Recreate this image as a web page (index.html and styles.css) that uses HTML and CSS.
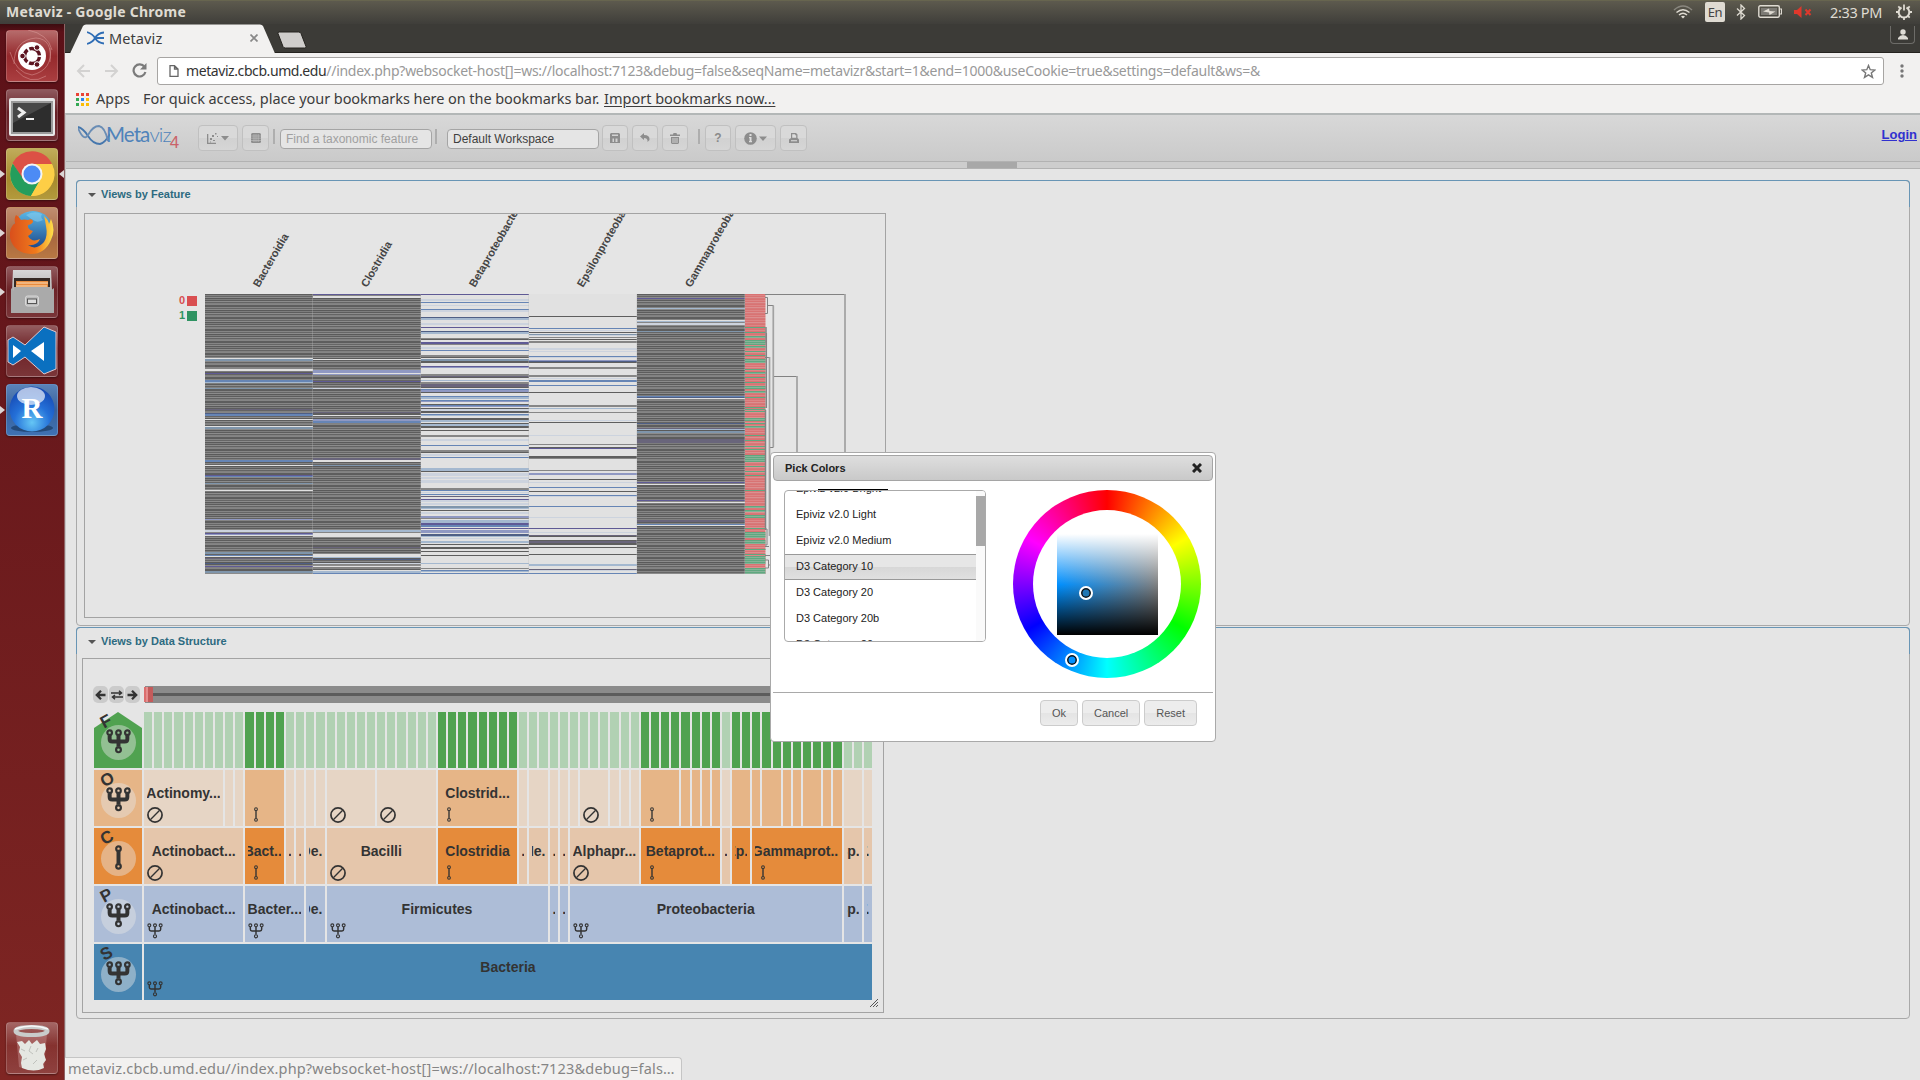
FILE: index.html
```html
<!DOCTYPE html>
<html lang="en">
<head>
<meta charset="utf-8">
<title>Metaviz</title>
<link rel="stylesheet" href="styles.css">
</head>
<body>
<svg width="0" height="0" class="defs">
  <defs>
    <symbol id="fork" viewBox="0 0 24 24"><g fill="none" stroke="currentColor"><path d="M3.500 6v3.500q0 2.500 2.500 2.500h12q2.500 0 2.500-2.500V6M12 6v11" stroke-width="var(--w)"/><circle cx="3.500" cy="3.500" r="2.200" stroke-width="var(--c)"/><circle cx="12" cy="3.500" r="2.200" stroke-width="var(--c)"/><circle cx="20.500" cy="3.500" r="2.200" stroke-width="var(--c)"/><circle cx="12" cy="20" r="2.300" stroke-width="var(--c)"/></g></symbol>
    <symbol id="single" viewBox="0 0 24 24"><g fill="none" stroke="currentColor"><path d="M12 6v12" stroke-width="var(--w)"/><circle cx="12" cy="3.500" r="2.200" stroke-width="var(--c)"/><circle cx="12" cy="20.500" r="2.200" stroke-width="var(--c)"/></g></symbol>
    <symbol id="ban" viewBox="0 0 24 24"><g fill="none" stroke="currentColor"><circle cx="12" cy="12" r="10.600" stroke-width="2.600"/><path d="M5 19L19 5" stroke-width="2"/></g></symbol>
    <linearGradient id="steel" x2="0" y2="1"><stop offset="0" stop-color="#d8d8d8"/><stop offset="1" stop-color="#8f8f8f"/></linearGradient>
    <linearGradient id="ffx" x2="0" y2="1"><stop offset="0" stop-color="#5ab8e8"/><stop offset="1" stop-color="#173f83"/></linearGradient>
    <linearGradient id="fox" x1="0" x2="1"><stop offset="0" stop-color="#d94f1c"/><stop offset=".6" stop-color="#f07a1c"/><stop offset="1" stop-color="#ffe04a"/></linearGradient>
    <radialGradient id="rball" cx=".5" cy=".8" r=".8"><stop offset="0" stop-color="#65c6f5"/><stop offset=".5" stop-color="#2470d8"/><stop offset="1" stop-color="#1546b0"/></radialGradient>
  </defs>
</svg>

<header class="panel">
  <span class="panel-title">Metaviz - Google Chrome</span>
  <div class="indicators">
    <svg class="wifi" width="20" height="14" viewBox="0 0 20 14" fill="none" stroke="#dfdbd2" stroke-width="1.500"><path d="M1 5Q10-3 19 5" stroke="#8a877f"/><path d="M3.500 7.500Q10 2 16.500 7.500M6 10Q10 6.500 14 10"/><path d="M8 11.500Q10 10 12 11.500L10 13.500z" fill="#dfdbd2" stroke="none"/></svg>
    <span class="lang">En</span>
    <svg class="bt" width="10" height="16" viewBox="0 0 10 16" fill="none" stroke="#dfdbd2" stroke-width="1.300"><path d="M1 4.500L8.500 11.500 5 15V1L8.500 4.500 1 11.500"/></svg>
    <svg class="battery" width="24" height="13" viewBox="0 0 24 13"><rect x=".8" y=".8" width="20.500" height="11.400" rx="1.500" fill="none" stroke="#dfdbd2" stroke-width="1.400"/><rect x="3" y="3" width="16" height="7" fill="#7c7a74"/><path d="M22 4h1.500v5H22" fill="none" stroke="#dfdbd2" stroke-width="1.200"/><path d="M5 6.500l6-3 .5 2.500 6 .5-6 3.500-.5-2.500z" fill="#dfdbd2"/></svg>
    <svg class="mute" width="18" height="12" viewBox="0 0 18 12"><path d="M0 4h3l4.500-4v12L3 8H0z" fill="#df382c"/><path d="M11.500 3.500l5 5.500m0-5.500l-5 5.500" stroke="#df382c" stroke-width="2"/></svg>
    <span class="clock">2:33 PM</span>
    <svg class="gear" width="16" height="16" viewBox="0 0 16 16" fill="none" stroke="#dfdbd2"><path d="M5.500 3.500a5.300 5.300 0 1 0 5 0" stroke-width="2"/><path d="M8 .500v6" stroke-width="1.800"/><path d="M8 13v3M0 8h3M13 8h3M2.300 2.300l2 2M13.700 2.300l-2 2M2.300 13.700l2-2M13.700 13.700l-2-2" stroke-width="1.800"/></svg>
  </div>
</header>

<div class="desktop">
  <nav class="launcher">
    <div class="tile dash"><svg viewBox="0 0 52 52"><g fill="none" stroke="#e5a9a6" stroke-opacity=".45"><path d="M8 34Q8 10 30 8Q47 9 44 32"/><path d="M44 18Q47 40 26 45Q10 43 4 22"/><path d="M22 0Q42 4 46 20M10 40Q24 56 40 46"/></g><circle cx="26" cy="26" r="14" fill="#fff"/><circle cx="26" cy="26" r="7.500" fill="none" stroke="#5d1420" stroke-width="3.400" stroke-dasharray="13.700 2" stroke-dashoffset="-1"/><g fill="#5d1420" stroke="#fff"><circle cx="16.500" cy="26" r="2.800"/><circle cx="31" cy="17.500" r="2.800"/><circle cx="31" cy="34.500" r="2.800"/></g></svg></div>
    <div class="tile"><svg viewBox="0 0 52 52"><rect x="3" y="9" width="46" height="38" rx="2" fill="#e7e7e7"/><rect x="5" y="12" width="42" height="33" fill="#9a9a9a"/><rect x="7" y="14" width="38" height="29" fill="#2d2d2d"/><path d="M7 14h38L7 34z" fill="#484848"/><path d="M12 19l6 4.500-6 4.500" fill="none" stroke="#eee" stroke-width="3"/><path d="M20 30h8" stroke="#eee" stroke-width="2"/></svg></div>
    <div class="tile gold run active"><svg viewBox="0 0 52 52"><circle cx="26" cy="26" r="22" fill="#fccf45"/><path d="M6.500 15A22 22 0 0 1 46 16H26L17 32z" fill="#dc5145"/><path d="M6.800 15.500A22 22 0 0 0 25 48L34 32 18 32z" fill="#249d5c"/><path d="M26 16h20A22 22 0 0 1 25 48l10-17z" fill="#fdce46"/><circle cx="26" cy="26" r="10.500" fill="#f4f4f4"/><circle cx="26" cy="26" r="8.500" fill="#4c8bf5"/></svg></div>
    <div class="tile brown run"><svg viewBox="0 0 52 52"><circle cx="27" cy="24" r="20" fill="url(#ffx)"/><path d="M20 8q8-5 16-1-2 3 1 6-5 3-8 1-4-2-9-6z" fill="#8fd2f0" opacity=".5"/><path d="M38 9q4 3 5 8l2-5q5 11 0 21-6 14-20 14Q8 46 4 31 3 20 9 16q-1-5 1-8 4 2 5 5 3-1 7 0 4-2 5 1 0 3-5 4-1 4 5 6-2 4-5 5 4 7 12 3-3 7-12 6 8 6 16-3 4-6 2-16-1-6-2-10z" fill="url(#fox)"/></svg></div>
    <div class="tile run"><svg viewBox="0 0 52 52"><path d="M7 4h38l2 41H5z" fill="url(#steel)"/><rect x="8" y="12" width="36" height="12" fill="#352a25"/><path d="M10 15h32v9H10z" fill="#e98b3d"/><path d="M11 17h31M10 20h31" stroke="#f9dfc0"/><path d="M8 21h36v4l4-3v25H5V22l3 3z" fill="#aaa"/><rect x="19.500" y="30" width="13" height="10" rx="2" fill="#bbb" stroke="#d8d8d8"/><rect x="21.500" y="33" width="9" height="4.500" fill="#ddd" stroke="#555"/></svg></div>
    <div class="tile"><svg viewBox="0 0 52 52"><path d="M38 2l12 5v37l-12 5-19-17-12 8-5-3V15l5-3 12 8z" fill="#0a70c0" stroke="#e3c8cc"/><path d="M7 20v13l8-7zM38 17v19L25 26z" fill="#fff"/></svg></div>
    <div class="tile blue run"><svg viewBox="0 0 52 52"><ellipse cx="26" cy="44" rx="21" ry="4" fill="#244a7a"/><circle cx="26" cy="25" r="22.500" fill="url(#rball)"/><ellipse cx="25" cy="12" rx="14" ry="9" fill="#fff" opacity=".65"/><text x="26" y="34" class="r-letter">R</text></svg></div>
    <div class="tile bin"><svg viewBox="0 0 52 52"><path d="M10 12l3 33q13 5 25 0l3-33z" fill="#e7bcbc" opacity=".3"/><path d="M11 20l5-1 3 3 4-4 3 4 5-4 3 4 5-1 1 6-2 5 2 6-3 4 1 4q-10 5-22 0l-1-5 1-6-3-5 1-5z" fill="#e5e7e2"/><path d="M15 27l4 2m6-5l-2 5 4 3m5-6l-2 4m-13 8l4-2m6 6l4-4" stroke="#bfc1bc" fill="none"/><ellipse cx="25.500" cy="9" rx="16" ry="4" fill="none" stroke="#c9cccb" stroke-width="4"/><path d="M9 7q17-6 33 0" stroke="#f7f7f7" stroke-width="1.500" fill="none"/></svg></div>
  </nav>

  <div class="browser">
    <div class="tabstrip">
      <svg class="tab-shape" width="245" height="30" viewBox="0 0 245 30"><path d="M0 29.500h5L18 2q1-1.500 3-1.500h174q2 0 3 1.500l12 27.500h35v.5H0z" fill="#f2f1f0"/><path d="M214.500 8h19q2 0 2.500 1.500l5 13q0 1.500-1.500 1.500h-19q-2 0-2.500-1.500l-5-13Q212.500 8 214.500 8z" fill="#cfcdcb" stroke="#25231f"/></svg>
      <div class="tab">
        <svg width="17" height="14" viewBox="0 0 17 14" fill="none" stroke="#2f6db5" stroke-width="1.800"><path d="M0 1q6 2 8 6 3 5 9 5.500M0 13q6-2 8-6 3-5 9-5.500M9 7h8"/></svg>
        <span class="tab-name">Metaviz</span>
        <svg class="tab-x" width="8" height="8" viewBox="0 0 8 8" stroke="#888" stroke-width="1.700"><path d="M.500.500l7 7m0-7l-7 7"/></svg>
      </div>
      <div class="profile"><svg width="12" height="11" viewBox="0 0 12 11" fill="#dedbd5"><circle cx="6" cy="3" r="2.700"/><path d="M1 10.500V9q2-3 5-3t5 3v1.500z"/></svg></div>
    </div>
    <div class="navbar">
      <svg class="nav-icon" width="15" height="14" viewBox="0 0 15 14" fill="none" stroke="#d3d2d1" stroke-width="2"><path d="M14 7H2m6-6L2 7l6 6"/></svg>
      <svg class="nav-icon" width="15" height="14" viewBox="0 0 15 14" fill="none" stroke="#d3d2d1" stroke-width="2"><path d="M1 7h12M7 1l6 6-6 6"/></svg>
      <svg class="nav-icon" width="15" height="15" viewBox="0 0 15 15" fill="none" stroke="#7b7b7b" stroke-width="2.200"><path d="M12.500 4A6 6 0 1 0 13.400 9"/><path d="M14.500 0v6.500H8z" fill="#7b7b7b" stroke="none"/></svg>
      <div class="omnibox">
        <svg width="10" height="12" viewBox="0 0 10 12" fill="none" stroke="#666" stroke-width="1.300"><path d="M1 .700h4.500L9 4v7.300H1zM5.500.700V4H9"/></svg>
        <span class="url"><b>metaviz.cbcb.umd.edu</b>//index.php?websocket-host[]=ws://localhost:7123&amp;debug=false&amp;seqName=metavizr&amp;start=1&amp;end=1000&amp;useCookie=true&amp;settings=default&amp;ws=&amp;</span>
        <svg class="star" width="15" height="15" viewBox="0 0 15 15" fill="none" stroke="#777" stroke-width="1.400"><path d="M7.500 1.500l1.700 4.200 4.600.3-3.500 2.900 1.200 4.500-4-2.500-4 2.500 1.200-4.500L1.200 6l4.600-.3z"/></svg>
      </div>
      <svg class="dots" width="4" height="14" viewBox="0 0 4 14" fill="#777"><circle cx="2" cy="2" r="1.700"/><circle cx="2" cy="7" r="1.700"/><circle cx="2" cy="12" r="1.700"/></svg>
    </div>
    <div class="bookmarks">
      <span class="apps"><i></i><i></i><i></i><i></i><i></i><i></i><i></i><i></i><i></i></span>
      <span class="b-apps">Apps</span>
      <span class="b-hint">For quick access, place your bookmarks here on the bookmarks bar.</span>
      <span class="b-link">Import bookmarks now...</span>
    </div>

    <main class="page">
      <div class="toolbar">
        <div class="logo">
          <svg width="32" height="20" viewBox="0 0 32 20" fill="none" stroke-width="1.800"><path d="M0 2q5 1 10 9 5 8 12 8 5-1 10-10" stroke="#4677ad"/><path d="M0 3q6 14 10 7Q15 1 21 1q6 1 9 15" stroke="#6a8db5"/></svg>
          <span class="logo-text"><em>Meta</em>viz</span><span class="logo-four">4</span>
        </div>
        <span class="btn b1"><svg width="24" height="13" viewBox="0 0 24 13" fill="#8d8d8d"><path d="M1 2v10h9v-1.300H2.300V2z"/><path d="M4 6h2v2H4zM6 3h2v2H6zM9 1h1.500v1.500H9zM7 8h2v1H7zM4 9.500h1v1H4zM11 4h1v1h-1zM15 4h8l-4 4.500z"/></svg></span>
        <span class="btn b2"><svg width="10" height="10" viewBox="0 0 10 10"><rect width="10" height="10" rx="1.500" fill="#8d8d8d"/><path d="M0 3h10M0 5.200h10M0 7.500h10M3 1v8M5 1v8M7.200 1v8" stroke="#c2c2c2" stroke-width=".6"/></svg></span>
        <i class="sep s1"></i>
        <span class="field hint f1">Find a taxonomic feature</span>
        <i class="sep s2"></i>
        <span class="field f2">Default Workspace</span>
        <span class="btn b3"><svg width="10" height="10" viewBox="0 0 10 10"><path d="M1 0h8l1 1v9H0V1z" fill="#8d8d8d"/><path d="M2.500 5.500h1.500V9H2.500zM5.500 5.500H7.500v3.500H5.500zM2 1.500h6v1.500H2z" fill="#d2d2d2"/></svg></span>
        <span class="btn b4"><svg width="10" height="10" viewBox="0 0 10 10"><path d="M4 0v2q6 0 5.500 5L7.500 9q.5-4-3.500-4v2L0 3.500z" fill="#8d8d8d"/></svg></span>
        <span class="btn b5"><svg width="10" height="11" viewBox="0 0 10 11" fill="#8d8d8d"><path d="M0 1.500h3L3.500 0h3L7 1.500h3V3H0z"/><path d="M1 4h8v6l-1 1H2l-1-1zm1.500 1v5h1V5zm2 0v5h1V5zm2 0v5h1V5z" fill-rule="evenodd"/></svg></span>
        <i class="sep s3"></i>
        <span class="btn b6 q">?</span>
        <span class="btn b7"><svg width="24" height="13" viewBox="0 0 24 13"><circle cx="6.500" cy="6.500" r="6.300" fill="#8d8d8d"/><path d="M5.500 2h2v2h-2zM5 5h2.500v4H8v1.200H5V9h.6V6.200H5z" fill="#ddd"/><path d="M15 4.500h8L19 9z" fill="#8d8d8d"/></svg></span>
        <span class="btn b8"><svg width="10" height="10" viewBox="0 0 10 10"><path d="M2 0h5l1.500 1.500V5L10 6.500V10H0V6.500L2 5z" fill="#8d8d8d"/><path d="M3.200 1.200h3v1h1v2.500h-4zM2 7.300h6v1H2z" fill="#ddd"/></svg></span>
        <a class="login">Login</a>
      </div>
      <div class="splitter"><i></i></div>

      <section class="views by-feature">
        <h3>Views by Feature</h3>
        <div class="chart chart-heat"><svg id="heat" width="800" height="403" viewBox="85 214 800 403"></svg></div>
      </section>
      <section class="views by-structure">
        <h3>Views by Data Structure</h3>
        <div class="chart chart-tree">
          <div class="scroll-row">
            <span class="mini"><svg width="11" height="10" viewBox="0 0 11 10" fill="none" stroke="#333" stroke-width="2.300"><path d="M10.500 5H2.500M6 .800L1.800 5 6 9.200"/></svg></span>
            <span class="mini"><svg width="12" height="10" viewBox="0 0 12 10" fill="none" stroke="#333" stroke-width="1.500"><path d="M0 3h10M8 .800L10.500 3 8 5M12 7H2M4 5L1.500 7 4 9.200"/></svg></span>
            <span class="mini"><svg width="11" height="10" viewBox="0 0 11 10" fill="none" stroke="#333" stroke-width="2.300"><path d="M.500 5h8M5 .800L9.200 5 5 9.200"/></svg></span>
            <span class="track"><i></i></span>
          </div>
          <div id="levels" class="levels"></div>
          <svg class="grip" width="8" height="8" viewBox="0 0 8 8" stroke="#555" stroke-width="1"><path d="M0 8l8-8M3 8l5-5M6 8l2-2"/></svg>
        </div>
      </section>
      <div class="status">metaviz.cbcb.umd.edu//index.php?websocket-host[]=ws://localhost:7123&amp;debug=fals…</div>
    </main>
  </div>
</div>

<div class="dialog">
  <div class="titlebar"><span>Pick Colors</span><svg width="10" height="10" viewBox="0 0 10 10" stroke="#222" stroke-width="3"><path d="M1 1l8 8m0-8l-8 8"/></svg></div>
  <div class="dialog-body">
    <i class="strike"></i>
    <div class="list">
      <ul><li>Epiviz v2.0 Bright</li><li>Epiviz v2.0 Light</li><li>Epiviz v2.0 Medium</li><li class="on">D3 Category 10</li><li>D3 Category 20</li><li>D3 Category 20b</li><li>D3 Category 20c</li></ul>
      <span class="bar"><i></i></span>
    </div>
    <div class="wheel"><div class="hole"><div class="square"></div></div><i class="mark m1"></i><i class="mark m2"></i></div>
  </div>
  <div class="buttons"><button>Ok</button><button>Cancel</button><button>Reset</button></div>
</div>
<script src="charts.js"></script>
</body>
</html>
```
FILE: styles.css
```css
* { box-sizing: border-box; }
body { margin: 0; width: 1920px; height: 1080px; overflow: hidden; display: flex; flex-direction: column; font-family: "Liberation Sans", Arial, sans-serif; background: #e5e5e5; }
.defs { position: absolute; }
svg { display: block; flex: none; }
.panel, .browser .tab, .navbar, .bookmarks, .status { font-family: "Noto Sans", sans-serif; }
.panel { height: 24px; flex: none; background: linear-gradient(#5d5a4e, #3f3e3a); border-top: 1px solid #67654f; color: #dfdbd2; display: flex; justify-content: space-between; align-items: center; padding: 0 0 2px 6px; }
.panel-title { font-size: 14px; font-weight: 700; letter-spacing: .25px; }
.indicators { display: flex; align-items: center; padding-right: 8px; }
.lang { background: #dfdbd2; color: #444; width: 20px; height: 20px; border-radius: 2px; font-size: 13px; line-height: 20px; text-align: center; margin: 0 11px 0 12px; letter-spacing: -.5px; }
.battery { margin: 0 12px 0 12px; }
.clock { font-size: 14.5px; margin: 0 13px 0 18px; width: 53px; letter-spacing: -.35px; white-space: nowrap; }
.desktop { display: flex; flex: 1; min-height: 0; }
.launcher { width: 65px; flex: none; background: linear-gradient(#3c0c10, #5c1118 8px, #7f2623); border-right: 1px solid #8f6365; padding: 6px 6px; display: flex; flex-direction: column; gap: 7px; }
.tile { width: 52px; height: 52px; flex: none; border-radius: 4px; border: 1px solid rgba(255,255,255,.18); background: linear-gradient(rgba(255,255,255,.3), rgba(255,255,255,.06) 45%, rgba(255,255,255,.13)); position: relative; box-shadow: 0 1px 2px rgba(0,0,0,.4); }
.tile svg { width: 52px; height: 52px; margin: -1px; }
.dash { background: linear-gradient(#b66b6b, #95292c 50%, #aa3e40); }
.gold { background: linear-gradient(#c0ac5a, #a78a2e 60%, #b39a3c); }
.brown { background: linear-gradient(#c08d70, #a96840 60%, #b87843); }
.blue { background: linear-gradient(#5a83b8, #38619c 50%, #3f72b4); }
.bin { margin-top: auto; }
.run::before { content: ""; position: absolute; left: -7px; top: 21px; border: 4px solid transparent; border-left: 5px solid #dcd5d5; border-right: 0; }
.active::after { content: ""; position: absolute; right: -7px; top: 21px; border: 4px solid transparent; border-right: 5px solid #dcd5d5; border-left: 0; }
.r-letter { font: 700 29px "Liberation Serif", serif; fill: #fff; text-anchor: middle; }
.browser { flex: 1; display: flex; flex-direction: column; min-width: 0; }
.tabstrip { height: 29px; flex: none; background: #3c3b37; display: flex; justify-content: space-between; position: relative; border-bottom: 1px solid #25231f; }
.tab-shape { position: absolute; left: 0; top: 0; }
.tab { position: relative; width: 210px; display: flex; align-items: center; padding-left: 22px; color: #3c3c3c; }
.tab-name { font-size: 14.5px; margin-left: 5px; flex: 1; letter-spacing: .1px; }
.tab-x { margin-right: 17px; }
.profile { width: 25px; height: 18px; border: 1px solid #6d6c68; border-top: 0; border-radius: 0 0 4px 4px; margin: 2px 5px 0 0; display: flex; justify-content: center; padding-top: 3px; }
.navbar { height: 35px; flex: none; background: #f2f1f0; display: flex; align-items: center; padding-left: 11px; }
.nav-icon { margin-right: 13px; }
.omnibox { width: 1727px; height: 28px; margin-left: -3px; border: 1px solid #a7a5a3; border-radius: 3px; background: #fff; display: flex; align-items: center; padding: 0 7px 0 11px; margin-top: 1px; }
.url { margin: -2px 0 0 7px; font-size: 14px; letter-spacing: -.26px; color: #999; white-space: nowrap; flex: 1; }
.url b { font-weight: 400; color: #333; letter-spacing: -.42px; }
.dots { margin-left: 16px; }
.bookmarks { height: 25px; flex: none; background: #f2f1f0; display: flex; align-items: center; padding: 0 0 5px 11px; font-size: 14.5px; color: #3c3c3c; white-space: nowrap; }
.apps { display: grid; grid-template-columns: repeat(3, 3px); gap: 2px; margin: 3px 7px 0 0; }
.apps i { height: 3px; background: #ea4335; }
.apps i:nth-child(4) { background: #34a853; } .apps i:nth-child(5) { background: #2a84f0; } .apps i:nth-child(6) { background: #fbbc05; }
.apps i:nth-child(7) { background: #34a853; } .apps i:nth-child(8), .apps i:nth-child(9) { background: #fbbc05; }
.b-apps { width: 47px; } .b-hint { width: 461px; letter-spacing: -.06px; } .b-link { text-decoration: underline; text-underline-offset: 2px; }
.page { flex: 1; position: relative; border-top: 2px solid #b3b7b7; border-left: 1px solid #c5c5c5; background: #e5e5e5; min-height: 0; }
.toolbar { height: 47px; background: linear-gradient(#d8d8d8, #cacaca); border-bottom: 1px solid #b2b2b2; display: flex; padding: 10px 3px 0 12px; font-size: 12px; }
.logo { display: flex; width: 120px; height: 26px; }
.logo svg { margin-right: -4px; }
.logo-text { font: 300 20.5px/18px Lato, sans-serif; color: #4f83ba; letter-spacing: -.9px; }
.logo-text em { font-style: normal; font-weight: 400; }
.logo-four { font: 17px/36px "Liberation Sans", sans-serif; color: #c9636a; margin-left: -1px; }
.btn { height: 26px; border: 1px solid #c0c0c0; border-radius: 4px; background: linear-gradient(#d9d9d9 50%, #d1d1d1 50%, #d6d6d6); display: flex; align-items: center; justify-content: center; color: #8a8a8a; margin-right: 4px; }
.b1 { width: 40px; } .b2 { width: 27px; } .b3, .b4, .b5, .b6 { width: 26px; } .b7 { width: 41px; } .b8 { width: 27px; }
.q { font-weight: 700; font-size: 12px; }
.sep { width: 2px; height: 15px; background: #aeaeae; margin-top: 4px; }
.s1 { margin-right: 5px; } .s2 { margin: 4px 10px 0 3px; } .s3 { margin: 4px 5px 0 6px; }
.field { width: 152px; height: 20px; margin-top: 4px; border: 1px solid #a5a5a5; border-radius: 4px; background: #e5e5e5; line-height: 18px; padding-left: 5px; color: #3f3f3f; }
.hint { color: #a0a0a0; } .f2 { margin-right: 3px; }
.login { margin: 2px 0 0 auto; color: #3030cf; font-weight: 700; font-size: 13px; text-decoration: underline; }
.splitter { height: 7px; background: #cdcdcd; border-bottom: 1px solid #b2b2b2; padding-left: 901px; }
.splitter i { display: block; width: 50px; height: 6px; background: #a8a8a8; }
.views { width: 1834px; margin: 11px 0 0 10px; border: 1px solid #a9a9a9; border-radius: 4px; position: relative; display: flow-root; }
.by-feature { height: 446px; } .by-structure { height: 392px; margin-top: 1px; }
.views h3 { margin: -1px; height: 27px; border: 1px solid #6895b5; border-bottom: 0; border-radius: 4px 4px 0 0; font-size: 11px; line-height: 27px; padding-left: 24px; color: #2c6a80; position: relative; }
.views h3::before { content: ""; position: absolute; left: 11px; top: 12px; border: 4px solid transparent; border-top-color: #555; border-bottom: 0; }
.chart { border: 1px solid #a3a3a3; }
.chart-heat { width: 802px; height: 405px; margin: 7px 0 0 7px; overflow: hidden; }
.chart-tree { width: 802px; height: 355px; margin: 5px 0 0 5px; position: relative; }
.col-label { font: 700 11px "Liberation Sans", sans-serif; fill: #444; }
.key { font: 700 11px "Liberation Sans", sans-serif; text-anchor: end; }
.scroll-row { display: flex; margin: 27px 0 9px 10px; height: 17px; gap: 1px; }
.mini { width: 15px; border-radius: 5px; background: #cbcbcb; display: flex; align-items: center; justify-content: center; }
.track { margin-left: 4px; width: 728px; background: linear-gradient(#8b8b8b 7px, #5c5c5c 7px 10px, #8b8b8b 10px); position: relative; }
.track i { position: absolute; left: -1px; top: 1px; width: 9px; height: 15px; background: linear-gradient(90deg, #dc6f6f 2px, #e58e8e 2px 4px, #c45b5b 4px); }
.levels { display: flex; flex-direction: column; gap: 2px; margin-left: 11px; color: #333; }
.level { display: grid; grid-template-columns: 48px 728px; gap: 2px; height: 56px; }
.lhead { position: relative; --w: 3.800; --c: 2.100; }
.lhead > i { display: block; height: 56px; }
.level:first-child .lhead > i { clip-path: polygon(0 16px, 50% 0, 100% 16px, 100% 100%, 0 100%); }
.lhead::after { content: ""; position: absolute; left: 6.500px; top: 13px; width: 35px; height: 35px; border-radius: 50%; background: rgba(229,229,229,.45); }
.lhead svg { position: absolute; z-index: 1; left: 12px; top: 17px; width: 25px; height: 25px; }
.lhead b { position: absolute; z-index: 1; left: 7px; top: 2px; font-size: 17px; line-height: 16px; transform: rotate(-28deg); }
.lcells { display: grid; grid-template-columns: repeat(72, 1fr); gap: 2px; }
.cell { position: relative; overflow: hidden; min-width: 0; --w: 2.200; --c: 1.700; }
.cell > span { display: flex; justify-content: center; overflow: hidden; margin: 15px 3px 0; font-size: 14px; line-height: 17px; font-weight: 700; white-space: nowrap; }
.cell > svg { position: absolute; left: 3px; bottom: 3px; width: 16px; height: 16px; }
.cell > .i-single { height: 15px; bottom: 4px; }
.grip { position: absolute; right: 5px; bottom: 5px; }
.status { position: absolute; left: -1px; bottom: 0; width: 617px; height: 23px; background: #f2f1f0; border: 1px solid #c5c5c5; border-left: 0; border-bottom: 0; border-radius: 0 4px 0 0; padding-left: 3px; font-size: 14.5px; letter-spacing: .17px; line-height: 21px; color: #858585; white-space: nowrap; }
.dialog { position: absolute; left: 770px; top: 452px; width: 446px; height: 290px; background: #fff; border: 1px solid #a9a9a9; border-radius: 4px; padding: 2px; font-size: 11px; color: #222; }
.titlebar { height: 26px; border: 1px solid #a5a5a5; border-radius: 4px; background: linear-gradient(#dedede, #c9c9c9); display: flex; justify-content: space-between; align-items: center; padding: 0 10px 0 11px; font-weight: 700; }
.dialog-body { height: 212px; border-bottom: 1px solid #a9a9a9; display: flex; padding: 9px 0 0 11px; position: relative; }
.strike { position: absolute; left: 45px; top: 8px; width: 70px; height: 1px; background: #000; }
.list { width: 202px; height: 152px; border: 1px solid #aaa; border-radius: 4px; overflow: hidden; display: flex; }
.list ul { list-style: none; margin: -15px 0 0; padding: 0; flex: 1; }
.list li { height: 26px; line-height: 24px; padding-left: 11px; }
.list .on { background: linear-gradient(#e6e6e6 50%, #d7d7d7 50%, #e0e0e0); border: solid #999; border-width: 1px 0; line-height: 22px; }
.bar { width: 9px; background: #fafafa; padding-top: 5px; }
.bar i { display: block; height: 50px; background: #a8a8a8; }
.wheel { width: 188px; height: 188px; margin-left: 27px; border-radius: 50%; background: conic-gradient(#f00, #ff0, #0f0, #0ff, #00f, #f0f, #f00); position: relative; display: grid; place-items: center; }
.hole { width: 148px; height: 148px; border-radius: 50%; background: #fff; display: grid; place-items: center; }
.square { width: 101px; height: 101px; background: linear-gradient(#fff, rgba(255,255,255,0) 50%, rgba(0,0,0,0) 50%, #000), linear-gradient(90deg, #0090ff, #808080); }
.mark { position: absolute; width: 14px; height: 14px; border: 2px solid #fff; border-radius: 50%; box-shadow: inset 0 0 0 1.500px #111; }
.m1 { left: 66px; top: 96px; background: #1f77b4; } .m2 { left: 52px; top: 163px; background: #0090ff; }
.buttons { display: flex; justify-content: flex-end; gap: 4px; padding: 7px 16px 0 0; }
.buttons button { font: 11px "Liberation Sans", sans-serif; height: 26px; padding: 0 11px; border: 1px solid #ccc; border-radius: 4px; background: linear-gradient(#ededed 50%, #e4e4e4 50%, #ececec); color: #555; }
```
FILE: charts.js
```js
// Heatmap: each entry is "row:colour[:height]" on a 280-row grid.
const COL = { w: '#e0e0e0', p: '#5f5a95', b: '#6685b5', l: '#a4b8cf', v: '#8f98c2', d: '#5e5e5e', g: '#868686', n: '#4f5f85', e: '#ccd3de', k: '#69657b', s: '#7f95ab' };
const columns = [
  ['Bacteroidia', 1, '64:w 65:s:2 74:g 75:w:2 79:p 86:b:2 88:l 94:s 115:k 119:n 120:b:2 125:w 132:w 133:s:2 166:b:2 171:w 181:p 182:b 189:s 196:w 225:v 236:e:2 239:p 240:v 241:w 258:s:2 261:b 262:w 264:k 269:n 272:p 277:s:2'],
  ['Clostridia', 1, '0:p 1:g 2:w:2 65:w 76:v:3 79:w 80:v 87:p 94:e 118:k 121:w 125:v:2 127:b:2 164:k:2 166:w:2 171:s 236:l:2 239:w:4 253:k 259:g 260:w:3 263:l 265:n 269:e 270:g 272:w 276:w 277:l:2 279:b'],
  ['Betaproteobacteria', 0, '0:p 5:e:2 8:b 11:e 15:b 16:e:2 23:n 24:l:2 29:e:2 33:p 37:n 38:l:2 44:g 45:d 48:p:2 50:g 53:e:2 56:b 61:g:2 63:d 65:s:2 67:d:2 72:p 73:v 80:g:2 82:k 83:d 86:l 88:g:2 90:k:3 93:d 95:b 96:v:2 98:d 102:b 103:l:2 106:b 107:v 110:d 111:b 112:v 114:d 115:e:2 117:d:2 120:b 121:l 124:d:2 126:l:2 129:d 130:l:2 132:d:2 136:d 141:g:2 145:e:2 151:b 156:g:2 158:d 160:e:2 163:b 174:l:3 177:d 179:e:3 183:e:2 186:e:3 194:g:2 196:b 198:e 200:b 202:k 205:p 206:e:2 209:e:2 212:s:2 214:l 216:d 218:e:2 222:v:2 224:g 226:l:3 229:p:2 231:b:2 234:p 236:v:3 240:n:2 242:l 244:e 247:l:2 250:d 253:d:2 257:d 261:d 269:l 274:g 276:b 277:l 279:b'],
  ['Epsilonproteobacteria', 0, '22:d 34:b 36:e 38:d 40:s 41:e 43:g 45:d 47:g:2 54:e:2 57:e 62:b 63:e 66:v 67:n 68:d 73:g:2 81:g:2 84:e 86:b:2 91:b 98:d 111:g:2 114:l 118:g 126:e 128:d 141:e 150:g 153:d 154:p 162:d:2 164:g 176:g 179:v:2 185:d 188:e 193:b 197:d 201:b 202:e 212:b 223:e 234:p 238:e 241:k 242:d 246:d 247:k:2 249:d:2 253:d 260:d 270:l:2 275:k 276:e 279:b'],
  ['Gammaproteobacteria', 1, '4:p 14:l 26:w 27:l 28:g 29:e:2 37:s 102:b 103:n 104:w 129:n 134:k 135:l 137:s:2 145:k:4 188:p 190:w 206:p 208:w 226:k:2 230:b 231:w']
];
const strip = '33:1 38:1 42:2 46:5 52:2 57:1 61:1 65:4 75:1 78:2 83:1 88:1 92:2 94:1 97:2 103:1 113:1 115:1 117:1 124:3 129:1 132:2 141:1 146:1 152:1 155:1 161:7 172:1 177:1 181:1 196:1 212:2 216:2 221:3 234:1 238:6 246:4 255:1 260:1 262:8 274:6';
const grey = ['#5d5d5d', '#858585', '#666', '#8b8b8b', '#5a5a5a', '#7d7d7d', '#5d5d5d', '#8c8c8c', '#646464', '#818181', '#858585', '#5e5e5e'];
const rect = (x, y, w, h, f) => `<rect x="${x}" y="${y}" width="${w}" height="${h}" fill="${f}"/>`;
let out = '';
columns.forEach(([name, dark, rows], i) => {
  const x = 205 + i * 108;
  if (dark) for (let r = 0; r < 280; r++) out += rect(x, 294 + r, 108, 1, grey[r % 12]);
  else out += rect(x, 294, 108, 280, '#e1e1e1');
  rows.split(' ').forEach(t => { const [r, c, h] = t.split(':'); out += rect(x, 294 + +r, 108, h || 1, COL[c]); });
  out += rect(x + 107.500, 294, .800, 280, 'rgba(190,190,190,.6)');
  out += `<text class="col-label" transform="translate(${x + 54} 288) rotate(-60)">${name}</text>`;
});
for (let r = 0; r < 280; r++) out += rect(745, 294 + r, 20.500, 1, ['#d97373', '#dc8686', '#d97373', '#db9090', '#d67979'][r % 5]);
strip.split(' ').forEach(t => { const [r, h] = t.split(':'); for (let k = 0; k < h; k++) out += rect(745, 294 + +r + k, 20.500, 1, k % 2 ? '#86b398' : '#5fa880'); });
out += rect(187, 296, 10, 10, '#d94f51') + rect(187, 311, 10, 10, '#2f9362');
out += '<text class="key" x="185" y="304" fill="#d94f51">0</text><text class="key" x="185" y="319" fill="#2f9362">1</text>';
out += '<g fill="none" stroke="#828282"><path d="M765 294.500H845"/><path d="M773.500 376.500H797M768 305.500h5.500M769 447.500h4.500M765 297.500h2.500v16H765M765 357.500h4.500M765 546.500h4M765 529h2v16h-2M765 555.500h5M765 560h3.500v8H765M768 565h3"/><path d="M766 327v16M766.300 333v75M765.500 410v120" stroke-width="1.500"/></g>';
out += '<g fill="none" stroke="#a2a2a2" stroke-width="1.700"><path d="M845 294V560M797 376V560M773.300 305.500V447M769.500 357V536"/></g>';
document.getElementById('heat').innerHTML = out;

// Taxonomy levels: cells are [span, selected, label, icon]; each level spans 72 columns.
const S = (n, on) => Array.from({ length: n }, () => [1, on]);
const levels = [
  ['F', 'fork', '#50a250', '#b1d1b3', [...S(10), ...S(4, 1), ...S(15), ...S(8, 1), ...S(12), ...S(8, 1), ...S(1), ...S(11, 1), ...S(3)]],
  ['O', 'fork', '#e6b587', '#e6d5c5', [[8, 0, 'Actinomy...', 'ban'], ...S(2), [4, 1, '', 'single'], ...S(4), [5, 0, '', 'ban'], [6, 0, '', 'ban'], [8, 1, 'Clostrid...', 'single'], [1], [2], ...S(3), [3, 0, '', 'ban'], ...S(3), [4, 1, '', 'single'], ...S(4, 1), [1], [2, 1], [1, 1], [2, 1], ...S(2, 1), [2, 1], ...S(2, 1), [2], [1]]],
  ['C', 'single', '#e58b3b', '#e5c6ab', [[10, 0, 'Actinobact...', 'ban'], [4, 1, 'Bact...', 'single'], [1, 0, '...'], [1, 0, '...'], [2, 0, 'De...'], [11, 0, 'Bacilli', 'ban'], [8, 1, 'Clostridia', 'single'], [1, 0, '...'], [2, 0, 'Ne...'], [1, 0, 'E...'], [1, 0, 'L...'], [7, 0, 'Alphapr...', 'ban'], [8, 1, 'Betaprot...', 'single'], [1, 0, '...'], [2, 1, 'Ep...'], [9, 1, 'Gammaprot...', 'single'], [2, 0, 'Sp...'], [1, 0, 'T...']]],
  ['P', 'fork', '#adbdd7', '#adbdd7', [[10, 0, 'Actinobact...', 'fork'], [6, 0, 'Bacter...', 'fork'], [2, 0, 'De...'], [22, 0, 'Firmicutes', 'fork'], [1, 0, 'E...'], [1, 0, 'L...'], [27, 0, 'Proteobacteria', 'fork'], [2, 0, 'Sp...'], [1, 0, 'T...']]],
  ['S', 'fork', '#4785b1', '#4785b1', [[72, 0, 'Bacteria', 'fork']]]
];
const icon = id => `<svg class="i-${id}"><use href="#${id}"/></svg>`;
document.getElementById('levels').innerHTML = levels.map(([letter, ic, on, off, cells]) =>
  `<div class="level"><div class="lhead"><i style="background:${on}"></i><b>${letter}</b>${icon(ic)}</div><div class="lcells">` +
  cells.map(([n, sel, label, i]) => `<div class="cell" style="grid-column:span ${n};background:${sel ? on : off}">${label ? `<span>${label}</span>` : ''}${i ? icon(i) : ''}</div>`).join('') +
  '</div></div>').join('');
```
